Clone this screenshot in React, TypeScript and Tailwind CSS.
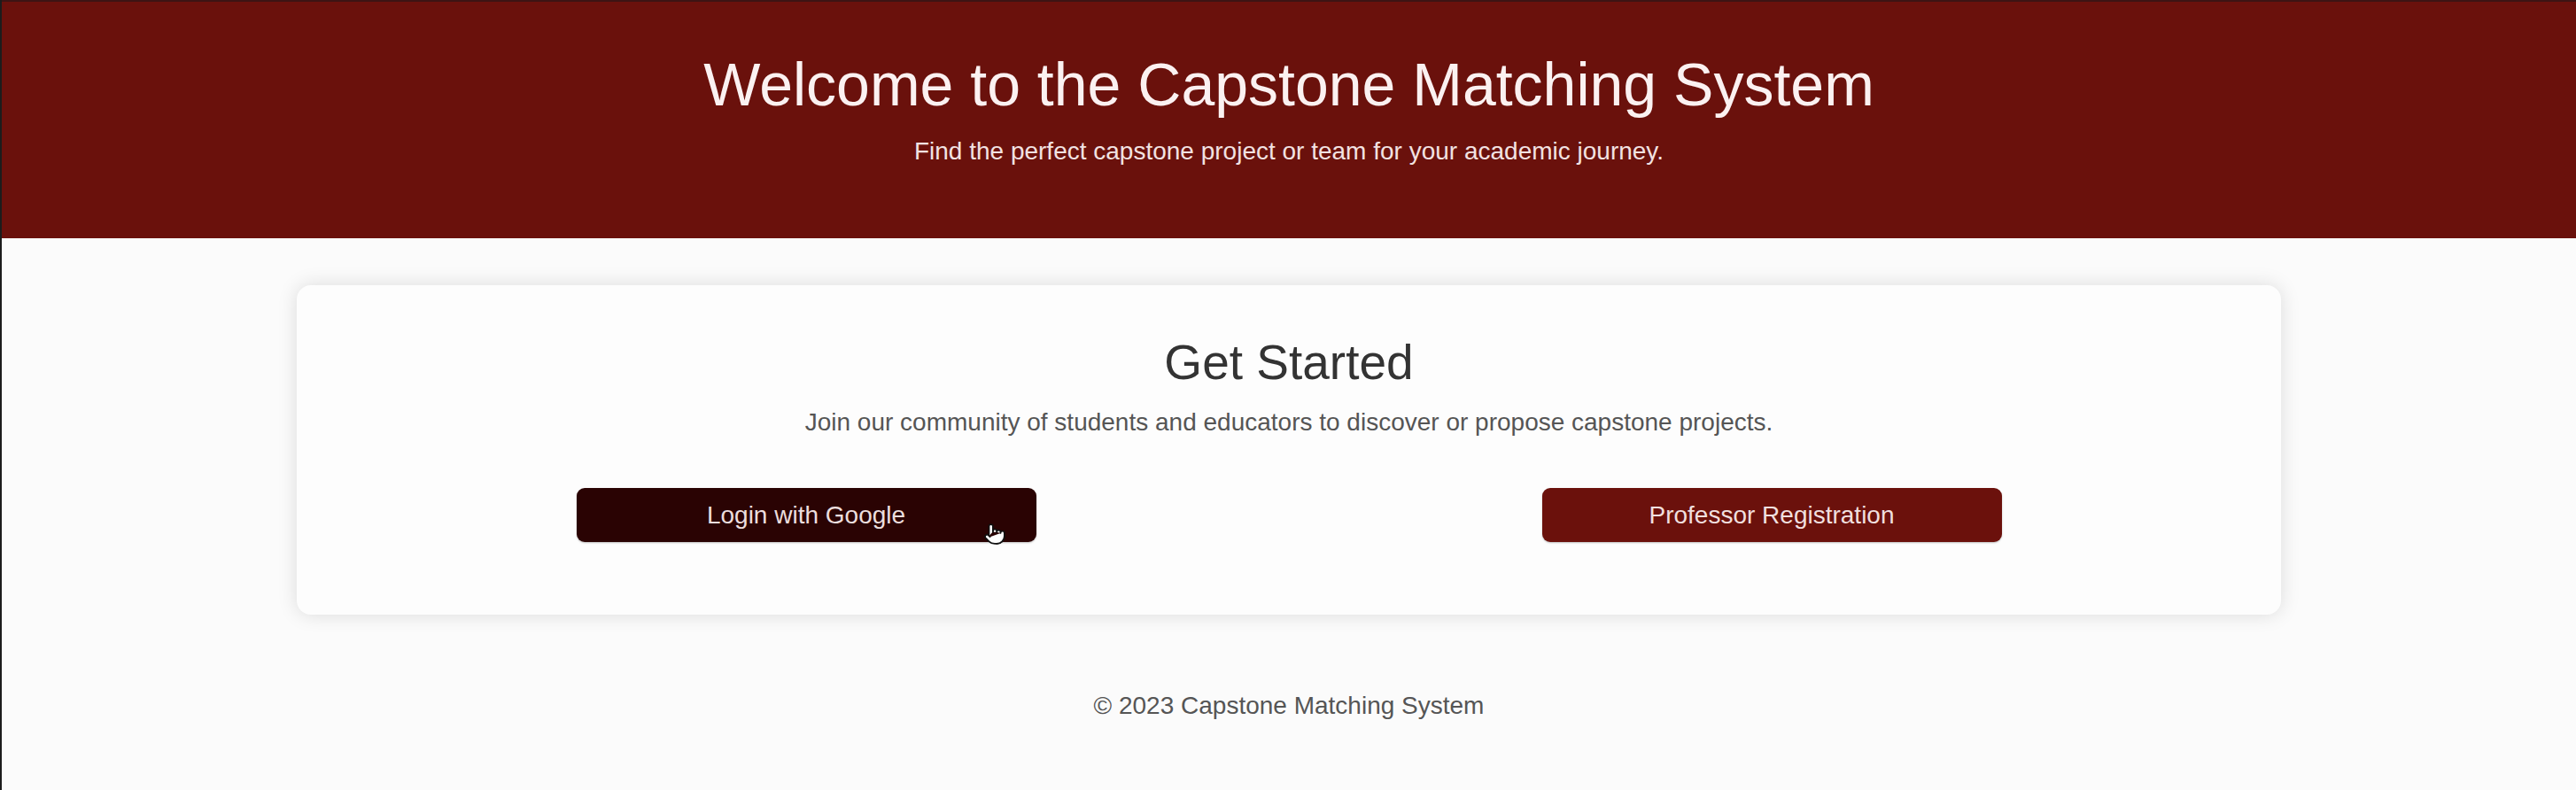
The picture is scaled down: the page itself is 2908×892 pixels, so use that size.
import { Pointer } from "lucide-react"

const FONT = "font-['Liberation_Sans',Arial,sans-serif]"

export default function App() {
  return (
    <div className={`min-h-[892px] w-full bg-[#fbfbfb] border-l-2 border-[#1c1c1c] ${FONT}`}>
      {/* Header */}
      <header className="bg-[#6a110c] border-t-2 border-[#3d1414] pt-[52px] pb-[81px] text-center">
        <h1 className="text-[68px] leading-[82px] text-[#fbf1f1] font-normal">
          Welcome to the Capstone Matching System
        </h1>
        <p className="mt-[18px] text-[28px] leading-[34px] text-[#f2e2e2]">
          Find the perfect capstone project or team for your academic journey.
        </p>
      </header>

      {/* Card */}
      <main className="pt-[53px]">
        <section className="mx-auto w-[2240px] rounded-[16px] bg-[#fdfdfd] shadow-[0_0_22px_rgba(0,0,0,0.13)] px-[30px] pt-[54px] pb-[82px] text-center">
          <h2 className="text-[55px] leading-[66px] text-[#333333] font-normal">Get Started</h2>
          <p className="mt-[18px] text-[28px] leading-[34px] text-[#555555]">
            Join our community of students and educators to discover or propose capstone projects.
          </p>
          <div className="mt-[57px] flex justify-around">
            <button className="relative w-[519px] h-[61px] rounded-[9px] bg-[#2a0303] text-[28px] text-[#ecdede] shadow-[0_1px_2px_rgba(0,0,0,0.25)]">
              Login with Google
              <Pointer
                className="absolute left-[459px] top-[38px] w-[26px] h-[28px] pointer-events-none"
                fill="#ffffff"
                stroke="#111111"
                strokeWidth={1.6}
              />
            </button>
            <button className="w-[519px] h-[61px] rounded-[9px] bg-[#6b110c] text-[28px] text-[#f0dfdf] shadow-[0_1px_2px_rgba(0,0,0,0.25)]">
              Professor Registration
            </button>
          </div>
        </section>
      </main>

      {/* Footer */}
      <footer className="pt-[86px] pb-[78px] text-center">
        <p className="text-[28px] leading-[34px] text-[#555555]">© 2023 Capstone Matching System</p>
      </footer>
    </div>
  )
}
